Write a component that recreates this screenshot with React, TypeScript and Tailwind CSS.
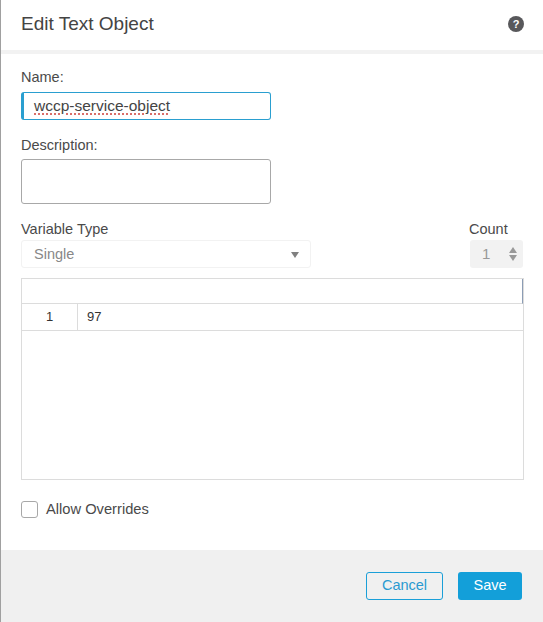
const App = () => {
  return (
    <div className="w-[543px] h-[622px] flex flex-col bg-white border-l border-[#a0a0a0] font-['Liberation_Sans',sans-serif] text-[#4a4a4a] overflow-hidden">
      {/* Header */}
      <div className="h-[54px] shrink-0 flex items-start justify-between border-b-[4px] border-[#f2f2f2] pl-5 pr-[19px]">
        <h1 className="text-[19px] leading-[48px] text-[#444]">Edit Text Object</h1>
        <HelpIcon />
      </div>

      {/* Form */}
      <div className="flex-1 pl-5 pr-[19px]">
        <label className="block mt-[15px] text-[14.5px] leading-4">Name:</label>
        <div className="mt-[7px] w-[250px] h-[28px] flex items-center border border-[#2a9fd0] border-l-[3px] rounded-[3px] pl-[10px] text-[15.5px] text-[#444]">
          <span className="underline decoration-dotted decoration-[#d0453f] underline-offset-2">wccp-service-object</span>
        </div>

        <label className="block mt-[17px] text-[14.5px] leading-4">Description:</label>
        <div className="mt-[6px] w-[250px] h-[45px] border border-[#a8a8a8] rounded-[3px]"></div>

        <div className="mt-[17px] flex justify-between">
          <div>
            <label className="block text-[14.5px] leading-4">Variable Type</label>
            <div className="mt-[3px] w-[290px] h-[28px] flex items-center justify-between border border-[#f2f2f2] rounded-[3px] pt-px pl-[12px] pr-[11px] text-[14.5px] text-[#888]">
              Single
              <span className="w-0 h-0 border-x-[4px] border-x-transparent border-t-[6px] border-t-[#808080]"></span>
            </div>
          </div>
          <div className="w-[54px]">
            <label className="block text-[14.5px] leading-4 -ml-[1px]">Count</label>
            <div className="mt-[3px] w-[53px] h-[28px] flex items-center justify-between bg-[#f2f2f2] rounded-[3px] pl-[12px] pr-[6px] text-[15px] text-[#999]">
              1
              <span className="flex flex-col gap-[2px]">
                <span className="w-0 h-0 border-x-[4px] border-x-transparent border-b-[6px] border-b-[#999]"></span>
                <span className="w-0 h-0 border-x-[4px] border-x-transparent border-t-[6px] border-t-[#999]"></span>
              </span>
            </div>
          </div>
        </div>

        {/* Table */}
        <div className="mt-[10px] w-[503px] h-[202px] border border-[#dcdcdc]">
          <div className="h-[25px] border-b border-[#dcdcdc] border-r border-r-[#8c9db5]"></div>
          <div className="h-[27px] flex border-b border-[#dcdcdc] text-[13px] text-[#333]">
            <div className="w-[56px] border-r border-[#dcdcdc] flex items-center justify-center">1</div>
            <div className="flex items-center pl-[9px]">97</div>
          </div>
        </div>

        <div className="mt-[21px] flex items-center gap-2">
          <span className="w-[17px] h-[17px] border border-[#a8a8a8] rounded-[3px]"></span>
          <span className="text-[14.7px] leading-4 -mt-[2px]">Allow Overrides</span>
        </div>
      </div>

      {/* Footer */}
      <div className="h-[72px] shrink-0 bg-[#f0f0f0] flex items-start justify-end gap-[15px] pt-[22px] pr-[21px]">
        <button className="w-[77px] h-[28px] border border-[#1a9fd8] rounded-[3px] text-[14.5px] text-[#2a9ad0]">Cancel</button>
        <button className="w-[64px] h-[28px] bg-[#139fd9] rounded-[3px] text-[14.5px] text-white">Save</button>
      </div>
    </div>
  );
};

const HelpIcon = () => (
  <span className="mt-4 w-4 h-4 rounded-full bg-[#58585b] flex items-center justify-center text-white text-[11px] font-bold leading-none">
    ?
  </span>
);

export default App;
